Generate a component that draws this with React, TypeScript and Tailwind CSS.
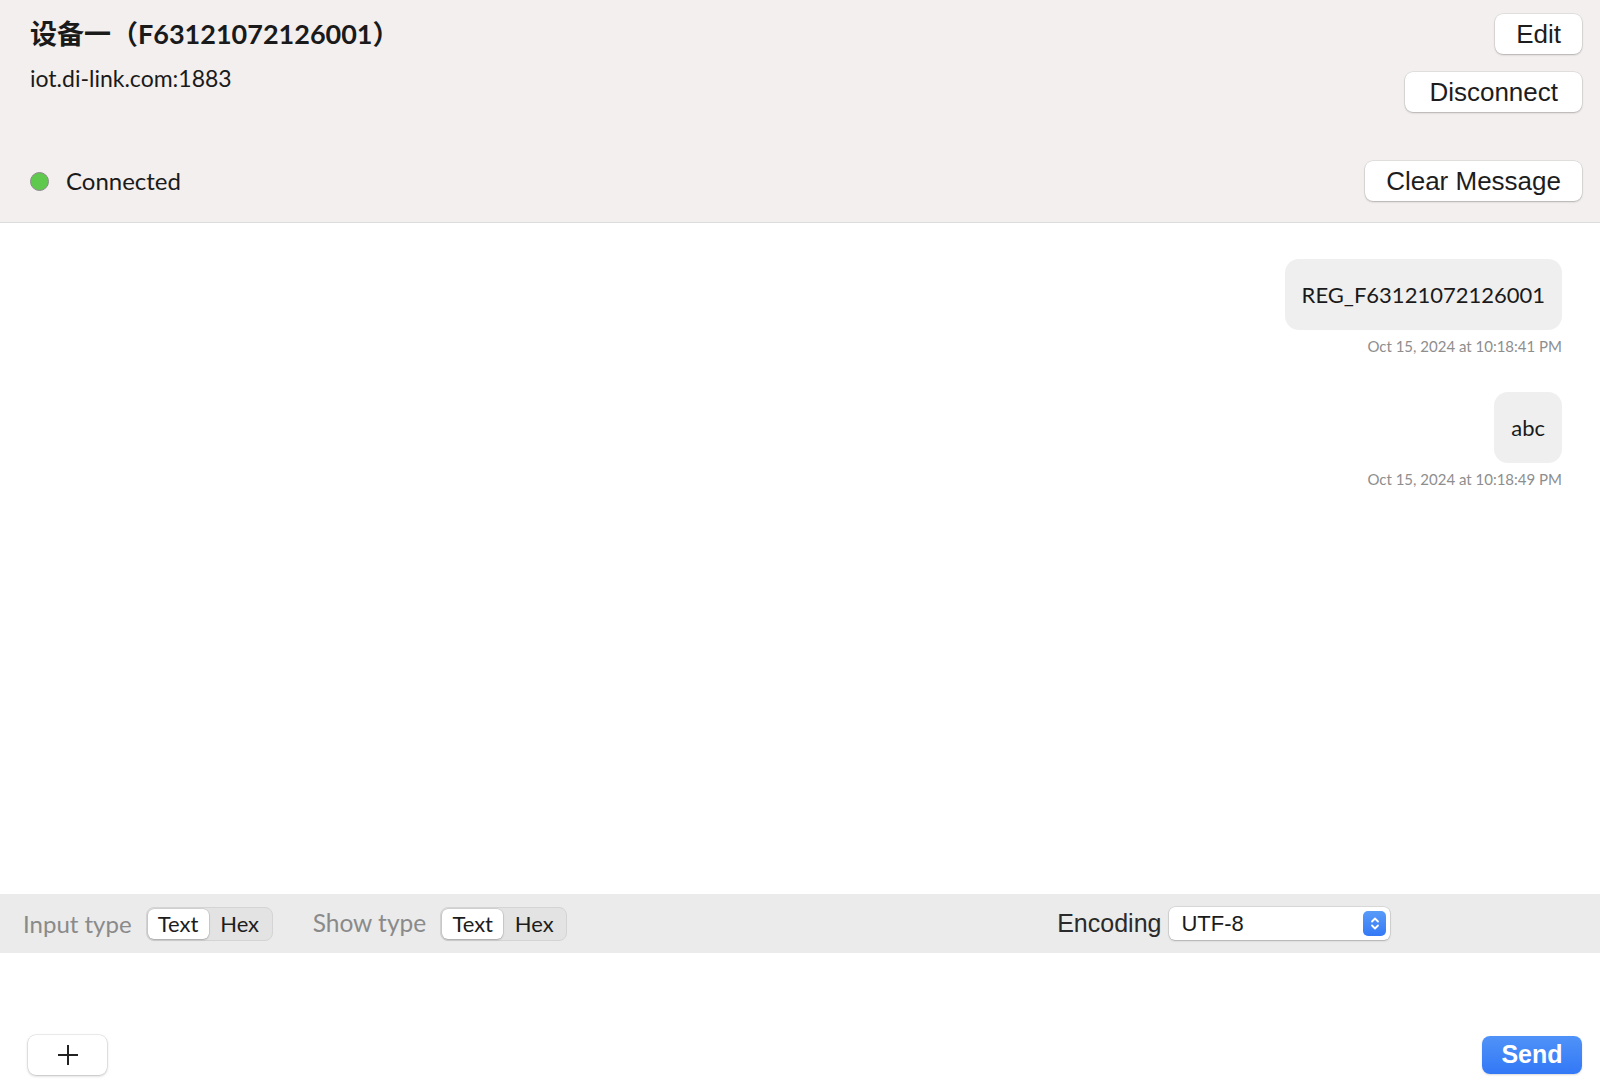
const lato = "font-['Lato','Noto_Sans_CJK_SC',sans-serif]";
const sys = "font-['Liberation_Sans','Noto_Sans_CJK_SC',sans-serif]";

type Msg = {
  id: number;
  body: string;
  time: string;
};

function MacButton({ label, className }: { label: string; className?: string }) {
  return (
    <button
      className={`${sys} h-[40px] rounded-[8px] bg-white text-[26px] leading-none text-[#1d1d1d] shadow-[0_0_0_0.5px_rgba(0,0,0,0.12),0_1px_2px_rgba(0,0,0,0.22)] ${className ?? ""}`}
    >
      {label}
    </button>
  );
}

function Segmented() {
  return (
    <div className={`${lato} ml-[14px] flex h-[34px] w-[127px] items-center rounded-[8px] border border-[#d4d4d4] bg-[#e3e3e3] p-[1px] text-[22px] text-[#1d1d1d]`}>
      <div className="flex h-full w-[61px] items-center justify-center rounded-[6px] bg-white shadow-[0_0_0_0.5px_rgba(0,0,0,0.15),0_1px_2px_rgba(0,0,0,0.2)]">
        Text
      </div>
      <div className="flex h-full flex-1 items-center justify-center">Hex</div>
    </div>
  );
}

export default function App() {
  const messages: Msg[] = [
    { id: 1, body: "REG_F63121072126001", time: "Oct 15, 2024 at 10:18:41 PM" },
    { id: 2, body: "abc", time: "Oct 15, 2024 at 10:18:49 PM" },
  ];

  return (
    <div className="flex h-[1087px] w-full flex-col bg-white">
      {/* header */}
      <div className="flex h-[223px] shrink-0 justify-between border-b border-[#dcdcdc] bg-[#f2efee] pl-[30px] pr-[18px]">
        <div className="flex flex-col pb-[25px] pt-[18px]">
          <div className={`${lato} text-[27px] font-bold leading-[32px] text-[#1a1a1a]`}>
            设备一（F63121072126001）
          </div>
          <div className={`${lato} mt-[12px] text-[23px] leading-[32px] text-[#1a1a1a]`}>
            iot.di-link.com:1883
          </div>
          <div className="mt-auto flex items-center">
            <span className="h-[19px] w-[19px] rounded-full border border-[#8a8a8a] bg-[#5fc94e]" />
            <span className={`${lato} ml-[17px] text-[24px] leading-[32px] text-[#1a1a1a]`}>
              Connected
            </span>
          </div>
        </div>
        <div className="flex flex-col items-end pt-[14px]">
          <MacButton label="Edit" className="h-[39px] px-[21px]" />
          <MacButton label="Disconnect" className="mt-[18px] px-[24px]" />
          <MacButton label="Clear Message" className="mt-[49px] px-[21px]" />
        </div>
      </div>

      {/* messages */}
      <div className="flex flex-1 flex-col items-end pr-[38px] pt-[36px]">
        {messages.map((m, i) => (
          <div key={m.id} className={`flex flex-col items-end ${i > 0 ? "mt-[36px]" : ""}`}>
            <div className={`${lato} flex h-[71px] items-center rounded-[14px] bg-[#efefef] px-[17px] text-[22px] text-[#1a1a1a]`}>
              {m.body}
            </div>
            <div className={`${lato} mt-[6px] text-[15px] leading-[20px] text-[#8e8e8e]`}>{m.time}</div>
          </div>
        ))}
      </div>

      {/* toolbar */}
      <div className="flex h-[59px] shrink-0 items-center bg-[#ebebeb] pl-[23px]">
        <span className={`${lato} text-[24px] text-[#8a8a8a]`}>Input type</span>
        <Segmented />
        <span className={`${lato} ml-[40px] text-[24.5px] text-[#8a8a8a]`}>Show type</span>
        <Segmented />
        <span className={`${sys} ml-[490px] text-[25px] text-[#2a2a2a]`}>Encoding</span>
        <div className="ml-[8px] flex h-[33px] w-[221px] items-center justify-between rounded-[6px] bg-white pl-[12px] pr-[4px] shadow-[0_0_0_0.5px_rgba(0,0,0,0.15),0_1px_2px_rgba(0,0,0,0.2)]">
          <span className={`${sys} text-[22px] text-[#1a1a1a]`}>UTF-8</span>
          <div className="flex h-[25px] w-[23px] items-center justify-center rounded-[5px] bg-gradient-to-b from-[#5a9bf8] to-[#3479f6]">
            <svg width="12" height="17" viewBox="0 0 12 17" fill="none">
              <path d="M3 6.5 L6 3.5 L9 6.5" stroke="white" strokeWidth="1.8" strokeLinecap="round" strokeLinejoin="round" />
              <path d="M3 10.5 L6 13.5 L9 10.5" stroke="white" strokeWidth="1.8" strokeLinecap="round" strokeLinejoin="round" />
            </svg>
          </div>
        </div>
      </div>

      {/* input area */}
      <div className="flex h-[134px] shrink-0 items-end justify-between pb-[12px] pl-[28px] pr-[18px]">
        <button className="flex h-[40px] w-[79px] items-center justify-center rounded-[8px] bg-white shadow-[0_0_0_0.5px_rgba(0,0,0,0.12),0_1px_3px_rgba(0,0,0,0.22)]">
          <svg width="22" height="22" viewBox="0 0 22 22">
            <path d="M11 1 V21 M1 11 H21" stroke="#222" strokeWidth="2" />
          </svg>
        </button>
        <button
          className={`${sys} mb-[1px] flex h-[38px] w-[100px] items-center justify-center rounded-[8px] bg-gradient-to-b from-[#4f92f8] to-[#3378f6] text-[25px] font-bold text-white shadow-[0_1px_2px_rgba(0,0,0,0.15)]`}
        >
          Send
        </button>
      </div>
    </div>
  );
}
